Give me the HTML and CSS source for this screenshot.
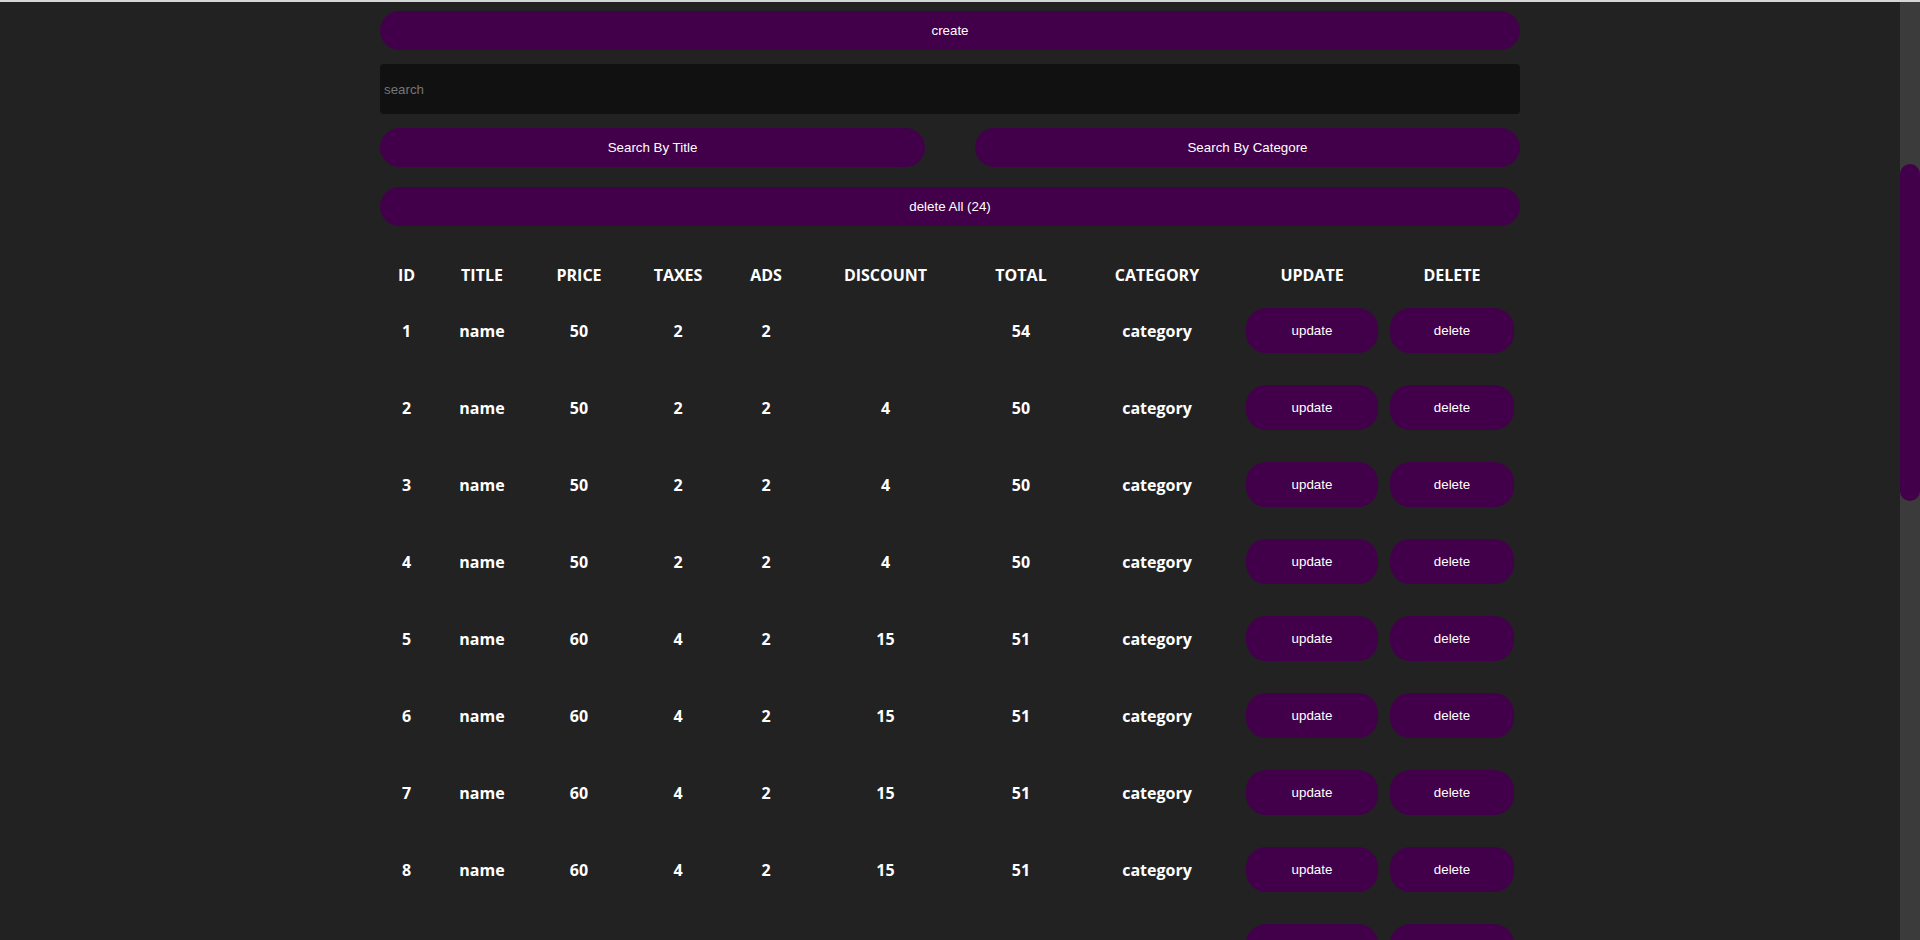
FILE: index.html
```html
<!DOCTYPE html>
<html lang="en">
<head>
<meta charset="utf-8">
<title>CRUDS</title>
<link rel="stylesheet" href="styles.css">
</head>
<body>
<div class="main">
  <div class="crud">
    <button class="btn btn-create">create</button>
    <input class="search" type="text" placeholder="search">
    <div class="search-block">
      <button class="btn">Search By Title</button>
      <button class="btn">Search By Categore</button>
    </div>
    <button class="btn btn-delete-all">delete All (24)</button>
    <table class="table">
      <colgroup>
        <col class="c-id"><col class="c-title"><col class="c-price"><col class="c-taxes"><col class="c-ads"><col class="c-discount"><col class="c-total"><col class="c-category"><col class="c-update"><col class="c-delete">
      </colgroup>
      <thead>
        <tr><th>id</th><th>title</th><th>price</th><th>taxes</th><th>ads</th><th>discount</th><th>total</th><th>category</th><th>update</th><th>delete</th></tr>
      </thead>
      <tbody>
        <tr><td>1</td><td>name</td><td>50</td><td>2</td><td>2</td><td></td><td>54</td><td>category</td><td><button class="btn btn-row">update</button></td><td><button class="btn btn-row">delete</button></td></tr>
        <tr><td>2</td><td>name</td><td>50</td><td>2</td><td>2</td><td>4</td><td>50</td><td>category</td><td><button class="btn btn-row">update</button></td><td><button class="btn btn-row">delete</button></td></tr>
        <tr><td>3</td><td>name</td><td>50</td><td>2</td><td>2</td><td>4</td><td>50</td><td>category</td><td><button class="btn btn-row">update</button></td><td><button class="btn btn-row">delete</button></td></tr>
        <tr><td>4</td><td>name</td><td>50</td><td>2</td><td>2</td><td>4</td><td>50</td><td>category</td><td><button class="btn btn-row">update</button></td><td><button class="btn btn-row">delete</button></td></tr>
        <tr><td>5</td><td>name</td><td>60</td><td>4</td><td>2</td><td>15</td><td>51</td><td>category</td><td><button class="btn btn-row">update</button></td><td><button class="btn btn-row">delete</button></td></tr>
        <tr><td>6</td><td>name</td><td>60</td><td>4</td><td>2</td><td>15</td><td>51</td><td>category</td><td><button class="btn btn-row">update</button></td><td><button class="btn btn-row">delete</button></td></tr>
        <tr><td>7</td><td>name</td><td>60</td><td>4</td><td>2</td><td>15</td><td>51</td><td>category</td><td><button class="btn btn-row">update</button></td><td><button class="btn btn-row">delete</button></td></tr>
        <tr><td>8</td><td>name</td><td>60</td><td>4</td><td>2</td><td>15</td><td>51</td><td>category</td><td><button class="btn btn-row">update</button></td><td><button class="btn btn-row">delete</button></td></tr>
        <tr><td>9</td><td>name</td><td>60</td><td>4</td><td>2</td><td>15</td><td>51</td><td>category</td><td><button class="btn btn-row">update</button></td><td><button class="btn btn-row">delete</button></td></tr>
      </tbody>
    </table>
  </div>
</div>
<div class="scrollbar"><div class="thumb"></div></div>
</body>
</html>
```
FILE: styles.css
```css
* {
  box-sizing: border-box;
}

html, body {
  margin: 0;
  padding: 0;
}

body {
  background: #222;
  color: #fff;
  height: 940px;
  overflow: hidden;
  display: flex;
  border-top: 2px solid #d6d6d6;
  font-family: "Open Sans", "Liberation Sans", sans-serif;
}

.main {
  flex: 1;
  overflow: hidden;
}

.crud {
  width: 60%;
  margin: 0 auto;
  padding-top: 9px;
}

.btn {
  display: block;
  width: 100%;
  height: 39px;
  border: none;
  border-radius: 20px;
  background: #42004a;
  color: #fff;
  font-family: "Liberation Sans", Arial, sans-serif;
  font-size: 13.333px;
  cursor: pointer;
  padding: 0;
}

.search {
  display: block;
  width: 100%;
  height: 50px;
  margin-top: 14px;
  border: none;
  outline: none;
  border-radius: 4px;
  background: #111;
  color: #fff;
  padding: 4px;
  font-family: "Liberation Sans", Arial, sans-serif;
  font-size: 13.333px;
}

.search::placeholder {
  color: #767676;
}

.search-block {
  display: flex;
  gap: 50px;
  margin-top: 14px;
}

.search-block .btn {
  flex: 1;
}

.btn-delete-all {
  margin-top: 20px;
}

.table {
  width: 100%;
  table-layout: fixed;
  border-collapse: collapse;
  margin-top: 32px;
  text-align: center;
}

.c-id { width: 53px; }
.c-title { width: 98px; }
.c-price { width: 96px; }
.c-taxes { width: 102px; }
.c-ads { width: 74px; }
.c-discount { width: 165px; }
.c-total { width: 106px; }
.c-category { width: 166px; }
.c-update { width: 144px; }
.c-delete { width: 136px; }

.table th {
  text-transform: uppercase;
  font-size: 16px;
  font-weight: 700;
  line-height: 22px;
  padding: 6px 6px;
}

.table td {
  font-size: 16px;
  font-weight: 700;
  line-height: 22px;
  padding: 16px 6px;
  height: 77px;
}

.btn-row {
  height: 45px;
}

.scrollbar {
  width: 20px;
  flex: none;
  background: #3b3b3b;
  padding-top: 162px;
}

.thumb {
  height: 337px;
  border-radius: 10px;
  background: #42004a;
}
```
